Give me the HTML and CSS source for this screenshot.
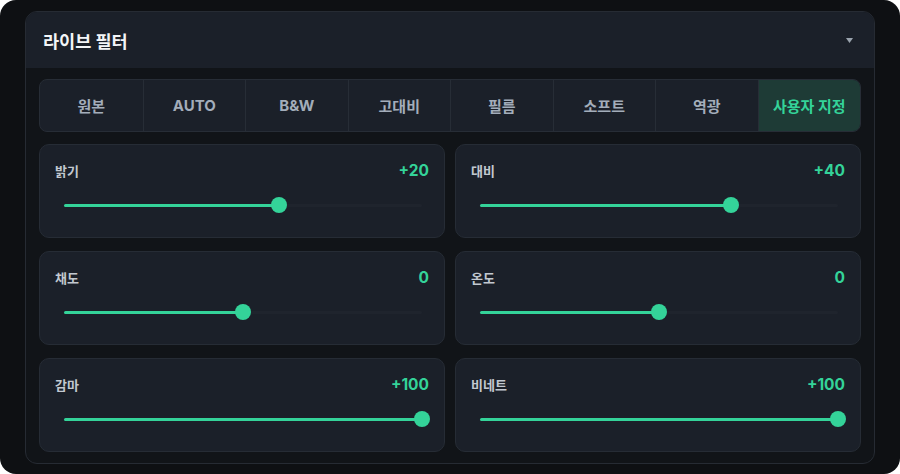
FILE: index.html
```html
<!DOCTYPE html>
<html lang="ko">
<head>
<meta charset="utf-8">
<title>라이브 필터</title>
<link rel="stylesheet" href="styles.css">
</head>
<body>
<div class="frame">
  <section class="panel">
    <header class="panel-head">
      <h1 class="title">라이브 필터</h1>
      <svg class="caret" width="7" height="5" viewBox="0 0 7 5"><path d="M0 0H7L3.5 5Z" fill="#9aa3ad"/></svg>
    </header>
    <div class="panel-body">
      <nav class="tabs">
        <div class="tab">원본</div>
        <div class="tab">AUTO</div>
        <div class="tab">B&amp;W</div>
        <div class="tab">고대비</div>
        <div class="tab">필름</div>
        <div class="tab">소프트</div>
        <div class="tab">역광</div>
        <div class="tab active">사용자 지정</div>
      </nav>
      <div class="cards">
        <div class="card">
          <div class="card-row"><span class="label">밝기</span><span class="value">+20</span></div>
          <div class="slider"><div class="track"><div class="fill" style="width:60%"></div></div><div class="thumb" style="left:60%"></div></div>
        </div>
        <div class="card">
          <div class="card-row"><span class="label">대비</span><span class="value">+40</span></div>
          <div class="slider"><div class="track"><div class="fill" style="width:70%"></div></div><div class="thumb" style="left:70%"></div></div>
        </div>
        <div class="card">
          <div class="card-row"><span class="label">채도</span><span class="value">0</span></div>
          <div class="slider"><div class="track"><div class="fill" style="width:50%"></div></div><div class="thumb" style="left:50%"></div></div>
        </div>
        <div class="card">
          <div class="card-row"><span class="label">온도</span><span class="value">0</span></div>
          <div class="slider"><div class="track"><div class="fill" style="width:50%"></div></div><div class="thumb" style="left:50%"></div></div>
        </div>
        <div class="card">
          <div class="card-row"><span class="label">감마</span><span class="value">+100</span></div>
          <div class="slider"><div class="track"><div class="fill" style="width:100%"></div></div><div class="thumb" style="left:100%"></div></div>
        </div>
        <div class="card">
          <div class="card-row"><span class="label">비네트</span><span class="value">+100</span></div>
          <div class="slider"><div class="track"><div class="fill" style="width:100%"></div></div><div class="thumb" style="left:100%"></div></div>
        </div>
      </div>
    </div>
  </section>
</div>
</body>
</html>
```

FILE: styles.css
```css
* { box-sizing: border-box; }
html, body { margin: 0; padding: 0; background: #ffffff; }
body {
  font-family: "Inter", "Noto Sans CJK KR", sans-serif;
  width: 900px;
  height: 474px;
  overflow: hidden;
}
.frame {
  width: 900px;
  height: 474px;
  background: #0e1013;
  border-radius: 16px;
  padding: 11px 25px 10px 25px;
}
.panel {
  height: 453px;
  border: 1px solid #262b33;
  border-radius: 12px;
  overflow: hidden;
  background: #111418;
  display: flex;
  flex-direction: column;
}
.panel-head {
  height: 56px;
  flex: none;
  background: #1b2029;
  display: flex;
  align-items: center;
  justify-content: space-between;
  padding: 0 21px 0 17px;
}
.title {
  margin: 0;
  font-size: 17.5px;
  font-weight: 700;
  color: #f3f5f7;
  letter-spacing: 0;
}
.caret { display: block; margin-top: 1px; }
.panel-body {
  padding: 11px 13px 0 13px;
}
.tabs {
  height: 53px;
  display: grid;
  grid-template-columns: repeat(8, 1fr);
  border: 1px solid #272d36;
  border-radius: 8px;
  overflow: hidden;
  background: #1b2029;
}
.tab {
  display: flex;
  align-items: center;
  justify-content: center;
  font-size: 15px;
  font-weight: 700;
  color: #a3adba;
  border-left: 1px solid #272d36;
}
.tab:first-child { border-left: none; }
.tab.active {
  background: #1e3b36;
  color: #34d399;
}
.cards {
  margin-top: 12px;
  display: grid;
  grid-template-columns: 1fr 1fr;
  grid-auto-rows: 94px;
  column-gap: 10px;
  row-gap: 13px;
}
.card {
  background: #1b2029;
  border: 1px solid #262c35;
  border-radius: 10px;
  padding: 15px 15px 0 15px;
}
.card-row {
  height: 20px;
  display: flex;
  align-items: center;
  justify-content: space-between;
}
.label {
  font-size: 13px;
  font-weight: 700;
  color: #c2c8d0;
}
.value {
  font-size: 15.5px;
  font-weight: 700;
  color: #34d399;
}
.slider {
  position: relative;
  height: 16px;
  margin: 17px 7px 0 9px;
  display: flex;
  align-items: center;
}
.track {
  width: 100%;
  height: 3px;
  border-radius: 2px;
  background: #1f242d;
}
.fill {
  height: 3px;
  border-radius: 2px;
  background: #34d399;
}
.thumb {
  position: absolute;
  top: 0;
  width: 16px;
  height: 16px;
  margin-left: -8px;
  border-radius: 50%;
  background: #34d399;
}
```
